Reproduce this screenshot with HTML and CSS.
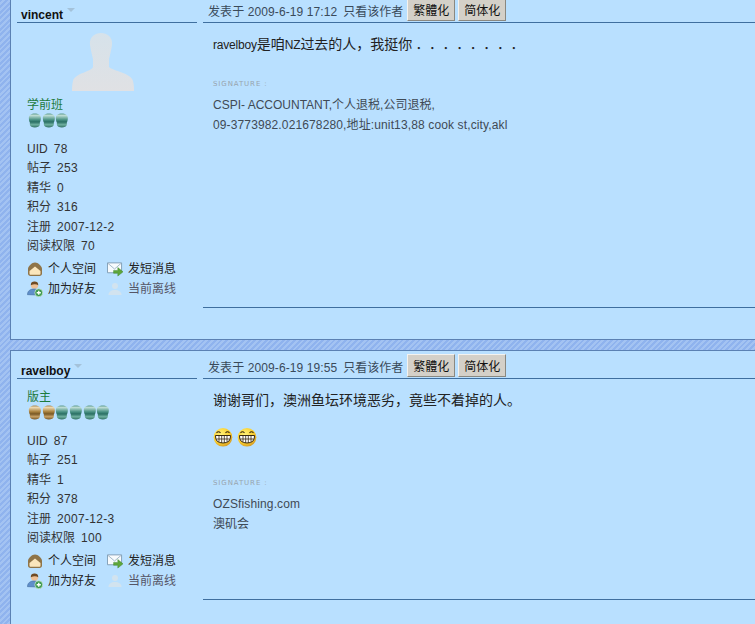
FILE: index.html
```html
<!DOCTYPE html>
<html lang="zh-CN">
<head>
    <meta charset="UTF-8">
    <meta name="viewport" content="width=device-width, initial-scale=1.0">
    <title>ravelboy</title>
    <link rel="stylesheet" href="styles.css">
</head>
<body>
    <svg class="defs" width="0" height="0">
        <defs>
            <linearGradient id="tealGem" x1="0" y1="0" x2="0" y2="1">
                <stop offset="0" stop-color="#5f9c90"/>
                <stop offset="0.14" stop-color="#bcdcd4"/>
                <stop offset="0.45" stop-color="#4a9284"/>
                <stop offset="0.6" stop-color="#2a6f64"/>
                <stop offset="0.8" stop-color="#6fb0a0"/>
                <stop offset="1" stop-color="#2f6f62"/>
            </linearGradient>
            <linearGradient id="goldGem" x1="0" y1="0" x2="0" y2="1">
                <stop offset="0" stop-color="#a88a58"/>
                <stop offset="0.14" stop-color="#ecd8b0"/>
                <stop offset="0.45" stop-color="#a8803c"/>
                <stop offset="0.6" stop-color="#785826"/>
                <stop offset="0.8" stop-color="#c8a266"/>
                <stop offset="1" stop-color="#745426"/>
            </linearGradient>
            <radialGradient id="smileFill" cx="0.4" cy="0.35" r="0.75">
                <stop offset="0" stop-color="#fff27a"/>
                <stop offset="0.6" stop-color="#fbd02f"/>
                <stop offset="1" stop-color="#c98a20"/>
            </radialGradient>
            <linearGradient id="avatarFill" x1="0" y1="0" x2="0" y2="1">
                <stop offset="0" stop-color="#d6e2ea"/>
                <stop offset="1" stop-color="#e0e1e4"/>
            </linearGradient>
            <symbol id="gem" viewBox="0 0 13 15">
                <path d="M.5 5C.5 2 3 .5 6.500 .5S12.500 2 12.500 5C12.500 7 12 8.500 11.500 9.500V11.500C11.500 13.500 9 14.500 6.500 14.500S1.500 13.500 1.500 11.500V9.500C1 8.500 .5 7 .5 5Z"/>
            </symbol>
            <symbol id="i-home" viewBox="0 0 16 16">
                <path d="M1 8C1 5 5 1.500 8 1.500S15 5 15 8V12.500C15 14 14 15 12.500 15H3.500C2 15 1 14 1 12.500Z" fill="#8f7448"/>
                <path d="M2.500 10L8 5.500 13.500 10V12.500C13.500 13.300 13 13.800 12.300 13.800H3.700C3 13.800 2.500 13.300 2.500 12.500Z" fill="#fbe6bc"/>
            </symbol>
            <symbol id="i-mail" viewBox="0 0 17 16">
                <path d="M.5 1.500h15v10.500H.5Z" fill="#f8fbfd" stroke="#7f9db4"/>
                <path d="M1 2l7 6 7-6" fill="none" stroke="#9fb5c6"/>
                <path d="M7 9.500h4.500V6.500L17 11l-5.500 4.500v-3H7Z" fill="#5fa63a" stroke="#3f8a2c" stroke-width=".5"/>
            </symbol>
            <symbol id="i-add" viewBox="0 0 17 17">
                <circle cx="8" cy="4.500" r="3.800" fill="#eec096"/>
                <path d="M4 4.500C4 1.500 5.500 .5 8 .5s4 1 4 4C10 3 7 3 4 4.500Z" fill="#6e4a24"/>
                <path d="M.5 14.500c0-4 3-6 7-6 3 0 5 1 6 3v3.500Z" fill="#5f8fca" stroke="#3f6a9c" stroke-width=".6"/>
                <circle cx="12.500" cy="12.500" r="4.200" fill="#3d9a50" stroke="#dff0e0" stroke-width=".7"/>
                <path d="M12.500 10.300v4.400M10.300 12.500h4.400" stroke="#fff" stroke-width="1.400"/>
            </symbol>
            <symbol id="i-off" viewBox="0 0 16 16">
                <circle cx="8" cy="5" r="3" fill="#d2e3ef"/>
                <path d="M1.500 14c0-3.500 3-5 6.500-5s6.500 1.500 6.500 5Z" fill="#d2e3ef"/>
            </symbol>
            <symbol id="smile" viewBox="0 0 20 20">
                <circle cx="10" cy="10.300" r="9.300" fill="url(#smileFill)"/>
                <path d="M3.500 6q2-2.500 4 0M12.500 6q2-2.500 4 0" fill="none" stroke="#3a2a10" stroke-width="1.100"/>
                <path d="M2.500 8.500h15q.5 7.500-7.500 7.500T2.500 8.500Z" fill="#fff" stroke="#3a2a10"/>
                <path d="M3 12h14M6 8.500v6.500M8.700 8.500v7.500M11.300 8.500v7.500M14 8.500v6.500" stroke="#3a2a10" stroke-width=".8" fill="none"/>
            </symbol>
        </defs>
    </svg>

    <div class="thread">
        <div class="post">
            <div class="side">
                <div class="author"><b>vincent</b><i class="caret"></i></div>
                <svg class="avatar" viewBox="0 0 62 60" width="62" height="60">
                    <path d="M18 12C17 4 23 0 29 0s12 4 11 12c-1 6-2 10-3 14v8c4 4 22 6 24 14 1 4 1 8 1 10H0c0-2 0-6 1-10 2-8 18-9 20-14v-8c-1-4-2-8-3-14Z" fill="url(#avatarFill)"/>
                </svg>
                <div class="rank">学前班</div>
                <div class="gems">
                    <svg class="gem teal"><use href="#gem"/></svg>
                    <svg class="gem teal"><use href="#gem"/></svg>
                    <svg class="gem teal"><use href="#gem"/></svg>
                </div>
                <ul class="stats">
                    <li><span>UID</span><span>78</span></li>
                    <li><span>帖子</span><span>253</span></li>
                    <li><span>精华</span><span>0</span></li>
                    <li><span>积分</span><span>316</span></li>
                    <li><span>注册</span><span>2007-12-2</span></li>
                    <li><span>阅读权限</span><span>70</span></li>
                </ul>
                <ul class="tools">
                    <li><svg class="ico"><use href="#i-home"/></svg>个人空间</li>
                    <li><svg class="ico"><use href="#i-mail"/></svg>发短消息</li>
                    <li><svg class="ico"><use href="#i-add"/></svg>加为好友</li>
                    <li class="off"><svg class="ico"><use href="#i-off"/></svg>当前离线</li>
                </ul>
            </div>
            <div class="main">
                <div class="meta">
                    <span class="when">发表于 2009-6-19 17:12</span>
                    <span>只看该作者</span>
                    <button class="conv">繁體化</button>
                    <button class="conv">简体化</button>
                </div>
                <div class="body">
                    <p class="msg"><span class="en">ravelboy</span>是咱<span class="en">NZ</span>过去的人，我挺你<span class="dots">．．．．．．．．</span></p>
                    <div class="sig-label">SIGNATURE :</div>
                    <div class="sig">CSPI- ACCOUNTANT,个人退税,公司退税,<br><span class="num">09-3773982.021678280,地址:unit13,88 cook st,city,akl</span></div>
                </div>
            </div>
        </div>

        <div class="post">
            <div class="side">
                <div class="author"><b>ravelboy</b><i class="caret"></i></div>
                <div class="rank">版主</div>
                <div class="gems">
                    <svg class="gem gold"><use href="#gem"/></svg>
                    <svg class="gem gold"><use href="#gem"/></svg>
                    <svg class="gem teal"><use href="#gem"/></svg>
                    <svg class="gem teal"><use href="#gem"/></svg>
                    <svg class="gem teal"><use href="#gem"/></svg>
                    <svg class="gem teal"><use href="#gem"/></svg>
                </div>
                <ul class="stats">
                    <li><span>UID</span><span>87</span></li>
                    <li><span>帖子</span><span>251</span></li>
                    <li><span>精华</span><span>1</span></li>
                    <li><span>积分</span><span>378</span></li>
                    <li><span>注册</span><span>2007-12-3</span></li>
                    <li><span>阅读权限</span><span>100</span></li>
                </ul>
                <ul class="tools">
                    <li><svg class="ico"><use href="#i-home"/></svg>个人空间</li>
                    <li><svg class="ico"><use href="#i-mail"/></svg>发短消息</li>
                    <li><svg class="ico"><use href="#i-add"/></svg>加为好友</li>
                    <li class="off"><svg class="ico"><use href="#i-off"/></svg>当前离线</li>
                </ul>
            </div>
            <div class="main">
                <div class="meta">
                    <span class="when">发表于 2009-6-19 19:55</span>
                    <span>只看该作者</span>
                    <button class="conv">繁體化</button>
                    <button class="conv">简体化</button>
                </div>
                <div class="body">
                    <p class="msg">谢谢哥们，澳洲鱼坛环境恶劣，竟些不着掉的人。</p>
                    <p class="smileys">
                        <svg class="smiley"><use href="#smile"/></svg>
                        <svg class="smiley"><use href="#smile"/></svg>
                    </p>
                    <div class="sig-label">SIGNATURE :</div>
                    <div class="sig"><span class="num">OZSfishing.com</span><br>澳矶会</div>
                </div>
            </div>
        </div>
    </div>
</body>
</html>
```

FILE: styles.css
```css
html, body {
    height: 100%;
}
body {
    margin: 0;
    overflow: hidden;
    font-family: "Liberation Sans", "Noto Sans CJK SC", sans-serif;
    font-size: 12px;
    color: #333;
    background: repeating-linear-gradient(135deg, #8fb3ee 0, #8fb3ee 2px, #a3c3f2 2px, #a3c3f2 4px);
}
.defs {
    position: absolute;
}
ul {
    list-style: none;
    margin: 0;
    padding: 0;
}
.thread {
    margin: -6px 0 0 10px;
    display: flex;
    flex-direction: column;
    gap: 10px;
}
.post {
    display: flex;
    gap: 6px;
    padding: 0 0 31px 6px;
    background: #b9e0ff;
    border: 1px solid #5b81b3;
    border-right: none;
}
.side {
    width: 180px;
    flex-shrink: 0;
    padding-bottom: 9px;
}
.author {
    height: 27px;
    padding-left: 4px;
    display: flex;
    align-items: flex-end;
    line-height: 14px;
    border-bottom: 1px solid #3f6f9f;
    color: #111;
}
.caret {
    width: 0;
    height: 0;
    margin: 0 0 10px 4px;
    border: 4px solid transparent;
    border-top: 4px solid #a4c2da;
    border-bottom: none;
}
.avatar {
    display: block;
    margin: 10px 0 4px 55px;
}
.rank {
    margin: 10px 0 0 10px;
    line-height: 16px;
    color: #1c7a3c;
}
.avatar + .rank {
    margin-top: 0;
}
.gems {
    display: flex;
    margin: 0 0 0 11px;
}
.gem {
    width: 13.700px;
    height: 15px;
}
.gem.teal {
    fill: url(#tealGem);
}
.gem.gold {
    fill: url(#goldGem);
}
.stats {
    margin: 12px 0 0 10px;
    line-height: 19.400px;
}
.stats li {
    display: flex;
    gap: 6px;
}
.stats span + span {
    letter-spacing: 0.300px;
}
.tools {
    display: grid;
    grid-template-columns: 80px 80px;
    margin: 2.600px 0 0 10px;
    line-height: 20px;
    color: #222;
}
.tools li {
    display: flex;
    align-items: center;
    gap: 5px;
}
.tools .off {
    color: #556;
}
.ico {
    width: 16px;
    height: 16px;
    flex-shrink: 0;
}
.main {
    flex: 1;
    display: flex;
    flex-direction: column;
    border-bottom: 1px solid #3f6f9f;
}
.meta {
    height: 27px;
    display: flex;
    align-items: flex-end;
    gap: 4px;
    padding-left: 5px;
    line-height: 19px;
    color: #3a4a5a;
    border-bottom: 1px solid #3f6f9f;
}
.when {
    letter-spacing: 0.100px;
}
.meta span + span {
    margin-left: 2px;
}
.conv {
    width: 48px;
    height: 23px;
    margin: 0 0 1px;
    padding: 0;
    font: 12px "Liberation Sans", "Noto Sans CJK SC", sans-serif;
    color: #111;
    background: #d4d0c8;
    border: 1px solid;
    border-color: #f4f2ee #8a8880 #8a8880 #f4f2ee;
}
.conv + .conv {
    margin-left: -1px;
}
.body {
    flex: 1;
    padding: 11px 0 0 10px;
}
.msg {
    margin: 0;
    font-size: 14px;
    line-height: 20px;
    color: #222;
}
.en {
    font-size: 12px;
    letter-spacing: -0.200px;
    line-height: 1;
}
.dots {
    font-family: "Noto Sans CJK SC", sans-serif;
    letter-spacing: -0.400px;
    line-height: 1;
    margin-left: 3px;
    text-spacing-trim: space-all;
}
.smileys {
    display: flex;
    gap: 4px;
    margin: 15px 0 28px;
}
.smiley {
    width: 20px;
    height: 24px;
}
.sig-label {
    margin-top: 24px;
    font-family: "DejaVu Sans", sans-serif;
    font-size: 7px;
    line-height: 12px;
    letter-spacing: 0.900px;
    color: #98a4ae;
}
.sig {
    margin-top: 5px;
    line-height: 20px;
    color: #3f4a55;
}
.num {
    letter-spacing: 0.130px;
}
```
